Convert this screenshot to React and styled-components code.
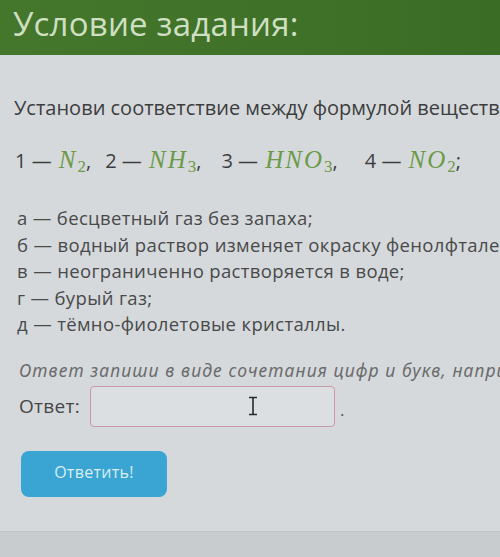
import React from "react";
import styled, { createGlobalStyle } from "styled-components";

const Global = createGlobalStyle`
  html, body { margin: 0; padding: 0; background: #d6d9db; }
  body { font-family: "Open Sans", "Noto Sans", sans-serif; overflow: hidden; }
`;

const Page = styled.div`
  width: 500px;
  height: 557px;
  display: flex;
  flex-direction: column;
  background: #d6d9db;
  overflow: hidden;
`;

const Header = styled.header`
  height: 55px;
  flex: none;
  background: linear-gradient(90deg, #44762c 0%, #3f7128 60%, #3b6c26 100%);
  display: flex;
  align-items: flex-start;
  padding-left: 13px;
`;

const Title = styled.h1`
  margin: 0;
  font-family: "Open Sans", sans-serif;
  font-weight: 400;
  font-size: 33px;
  line-height: 1;
  padding-top: 7px;
  color: #cfdfc2;
  letter-spacing: 0.2px;
  white-space: nowrap;
`;

const Content = styled.main`
  flex: 1;
  display: flex;
  flex-direction: column;
  padding: 40px 0 0 14px;
  color: #3c3d3e;
`;

const Lead = styled.p`
  margin: 0;
  font-size: 20px;
  line-height: 26px;
  white-space: nowrap;
`;

const Formulas = styled.p`
  margin: 25px 0 0 1px;
  font-size: 20px;
  line-height: 28px;
  white-space: nowrap;
  display: flex;
  align-items: baseline;
`;

const Item = styled.span`
  margin-right: ${(p) => p.$gap}px;
`;

const Chem = styled.span`
  font-family: "Liberation Serif", "DejaVu Serif", serif;
  font-style: italic;
  font-size: 25px;
  color: #6b9a48;
  letter-spacing: 2px;
  margin-left: 2px;
  sub {
    font-size: 17px;
    font-style: normal;
    vertical-align: -4px;
    line-height: 0;
    letter-spacing: 0;
  }
`;

const List = styled.ul`
  list-style: none;
  margin: 30px 0 0 3px;
  padding: 0;
`;

const ListItem = styled.li`
  font-size: 18.5px;
  letter-spacing: 0.35px;
  line-height: 26.5px;
  white-space: nowrap;
  color: #48494a;
`;

const Hint = styled.p`
  margin: 21px 0 0 5px;
  font-family: "Noto Sans", sans-serif;
  font-style: italic;
  font-size: 17.5px;
  letter-spacing: 1.1px;
  line-height: 22px;
  color: #6a6b6c;
  white-space: nowrap;
`;

const AnswerRow = styled.div`
  display: flex;
  align-items: center;
  margin: 5px 0 0 5px;
  gap: 10px;
`;

const AnswerLabel = styled.span`
  font-size: 19px;
  letter-spacing: 0.3px;
  color: #444546;
`;

const InputBox = styled.div`
  width: 245px;
  height: 41px;
  border: 1.5px solid #c99aa6;
  border-radius: 4px;
  background: #dcdfe1;
  display: flex;
  align-items: center;
  justify-content: center;
  padding-left: 80px;
  box-sizing: border-box;
`;

const Dot = styled.span`
  font-size: 17px;
  color: #555;
  margin-left: -5px;
  align-self: flex-end;
  padding-bottom: 6px;
`;

const Button = styled.button`
  margin: 24px 0 0 7px;
  width: 146px;
  height: 46px;
  border: none;
  border-radius: 8px;
  background: #3aa5d2;
  color: #d9eef6;
  font-family: "Open Sans", sans-serif;
  font-size: 16px;
  letter-spacing: 0.3px;
  padding: 0 0 4px 0;
  cursor: pointer;
`;

const Footer = styled.div`
  height: 25px;
  flex: none;
  background: #c9cccf;
  border-top: 1px solid #c2c5c8;
`;

const Cursor = () => (
  <svg width="12" height="20" viewBox="0 0 12 20" aria-hidden="true">
    <path d="M2 1.5h8M2 18.5h8M6 1.5v17" stroke="#2a2a2a" strokeWidth="1.6" fill="none" />
  </svg>
);

export default function App() {
  return (
    <>
      <Global />
      <Page>
        <Header>
          <Title>Условие задания:</Title>
        </Header>
        <Content>
          <Lead>Установи соответствие между формулой вещества и его свойством:</Lead>
          <Formulas>
            <Item $gap={14}>
              1 — <Chem>N<sub>2</sub></Chem>,
            </Item>
            <Item $gap={20}>
              2 — <Chem>NH<sub>3</sub></Chem>,
            </Item>
            <Item $gap={27}>
              3 — <Chem>HNO<sub>3</sub></Chem>,
            </Item>
            <Item $gap={0}>
              4 — <Chem>NO<sub>2</sub></Chem>;
            </Item>
          </Formulas>
          <List>
            <ListItem>а — бесцветный газ без запаха;</ListItem>
            <ListItem>б — водный раствор изменяет окраску фенолфталеина;</ListItem>
            <ListItem>в — неограниченно растворяется в воде;</ListItem>
            <ListItem>г — бурый газ;</ListItem>
            <ListItem>д — тёмно-фиолетовые кристаллы.</ListItem>
          </List>
          <Hint>Ответ запиши в виде сочетания цифр и букв, например: 1а2б3в4г.</Hint>
          <AnswerRow>
            <AnswerLabel>Ответ:</AnswerLabel>
            <InputBox>
              <Cursor />
            </InputBox>
            <Dot>.</Dot>
          </AnswerRow>
          <div>
            <Button>Ответить!</Button>
          </div>
        </Content>
        <Footer />
      </Page>
    </>
  );
}
